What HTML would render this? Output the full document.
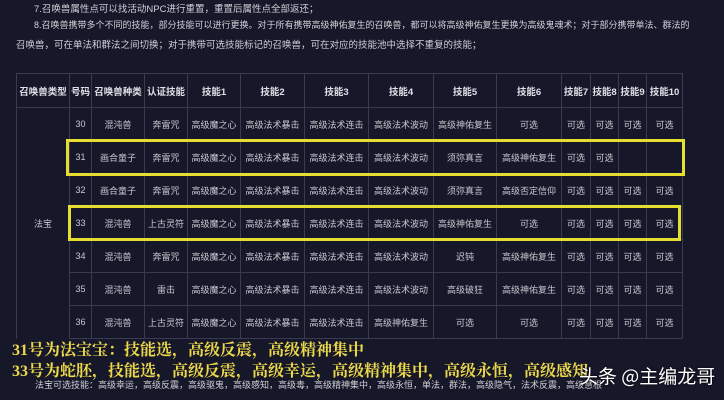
<!DOCTYPE html>
<html><head><meta charset="utf-8"><style>
body{margin:0;width:724px;height:400px;background:#17172a;overflow:hidden;position:relative;font-family:"Liberation Sans","Noto Sans CJK SC",sans-serif;color:#d8d8e0}
.t{position:absolute;font-size:9.5px;white-space:nowrap;color:#d0d0d8}
table{position:absolute;left:16px;top:73px;border-collapse:collapse;table-layout:fixed;font-size:9px;color:#c8c8d0}
td,th{border:1px solid #3a3a52;text-align:center;padding:0;height:32px;overflow:hidden;white-space:nowrap}
th{height:33px;font-weight:bold;color:#e0e0e8;font-size:9.5px}
.box{position:absolute;border:3px solid #e6de2e;box-sizing:border-box}
.y{position:absolute;color:#ecd94a;font-family:"Liberation Serif","Noto Serif CJK SC",serif;font-weight:bold;font-size:16px;white-space:nowrap}
</style></head><body>
<div class="t" style="left:34px;top:1px">7.召唤兽属性点可以找活动NPC进行重置，重置后属性点全部返还；</div>
<div class="t" style="left:34px;top:18px;font-size:9px">8.召唤兽携带多个不同的技能，部分技能可以进行更换。对于所有携带高级神佑复生的召唤兽，都可以将高级神佑复生更换为高级鬼魂术；对于部分携带单法、群法的</div>
<div class="t" style="left:16px;top:37px">召唤兽，可在单法和群法之间切换；对于携带可选技能标记的召唤兽，可在对应的技能池中选择不重复的技能；</div>
<table>
<colgroup><col style="width:53px"><col style="width:22px"><col style="width:53px"><col style="width:43px"><col style="width:53px"><col style="width:64px"><col style="width:64px"><col style="width:65px"><col style="width:63px"><col style="width:65px"><col style="width:29px"><col style="width:28px"><col style="width:28px"><col style="width:36px"></colgroup>
<tr><th>召唤兽类型</th><th>号码</th><th>召唤兽种类</th><th>认证技能</th><th>技能1</th><th>技能2</th><th>技能3</th><th>技能4</th><th>技能5</th><th>技能6</th><th>技能7</th><th>技能8</th><th>技能9</th><th>技能10</th></tr>
<tr><td rowspan="7" style="border-bottom:none">法宝</td><td>30</td><td>混沌兽</td><td>奔雷咒</td><td>高级魔之心</td><td>高级法术暴击</td><td>高级法术连击</td><td>高级法术波动</td><td>高级神佑复生</td><td>可选</td><td>可选</td><td>可选</td><td>可选</td><td>可选</td></tr>
<tr><td>31</td><td>画合童子</td><td>奔雷咒</td><td>高级魔之心</td><td>高级法术暴击</td><td>高级法术连击</td><td>高级法术波动</td><td>须弥真言</td><td>高级神佑复生</td><td>可选</td><td>可选</td><td></td><td></td></tr>
<tr><td>32</td><td>画合童子</td><td>奔雷咒</td><td>高级魔之心</td><td>高级法术暴击</td><td>高级法术连击</td><td>高级法术波动</td><td>须弥真言</td><td>高级否定信仰</td><td>可选</td><td>可选</td><td>可选</td><td>可选</td></tr>
<tr><td>33</td><td>混沌兽</td><td>上古灵符</td><td>高级魔之心</td><td>高级法术暴击</td><td>高级法术连击</td><td>高级法术波动</td><td>高级神佑复生</td><td>可选</td><td>可选</td><td>可选</td><td>可选</td><td>可选</td></tr>
<tr><td>34</td><td>混沌兽</td><td>奔雷咒</td><td>高级魔之心</td><td>高级法术暴击</td><td>高级法术连击</td><td>高级法术波动</td><td>迟钝</td><td>高级神佑复生</td><td>可选</td><td>可选</td><td>可选</td><td>可选</td></tr>
<tr><td>35</td><td>混沌兽</td><td>雷击</td><td>高级魔之心</td><td>高级法术暴击</td><td>高级法术连击</td><td>高级法术波动</td><td>高级破狂</td><td>高级神佑复生</td><td>可选</td><td>可选</td><td>可选</td><td>可选</td></tr>
<tr><td>36</td><td>混沌兽</td><td>上古灵符</td><td>高级魔之心</td><td>高级法术暴击</td><td>高级法术连击</td><td>高级神佑复生</td><td>可选</td><td>可选</td><td>可选</td><td>可选</td><td>可选</td><td>可选</td></tr>
</table>
<div class="box" style="left:66px;top:139px;width:619px;height:37px"></div>
<div class="box" style="left:68px;top:205px;width:613px;height:36px"></div>
<div class="y" style="left:12px;top:337px">31号为法宝宝：技能选，高级反震，高级精神集中</div>
<div class="y" style="left:12px;top:358px">33号为蛇胚，技能选，高级反震，高级幸运，高级精神集中，高级永恒，高级感知</div>
<div class="t" style="left:35px;top:378px;font-size:9px">法宝可选技能：高级幸运，高级反震，高级驱鬼，高级感知，高级毒，高级精神集中，高级永恒，单法，群法，高级隐气，法术反震，高级慧根</div>
<div style="position:absolute;left:579px;top:362px;font-size:19px;color:#fff;font-family:'Noto Sans CJK SC',sans-serif;white-space:nowrap;text-shadow:0 0 2px #000">头条 @主编龙哥</div>
</body></html>
